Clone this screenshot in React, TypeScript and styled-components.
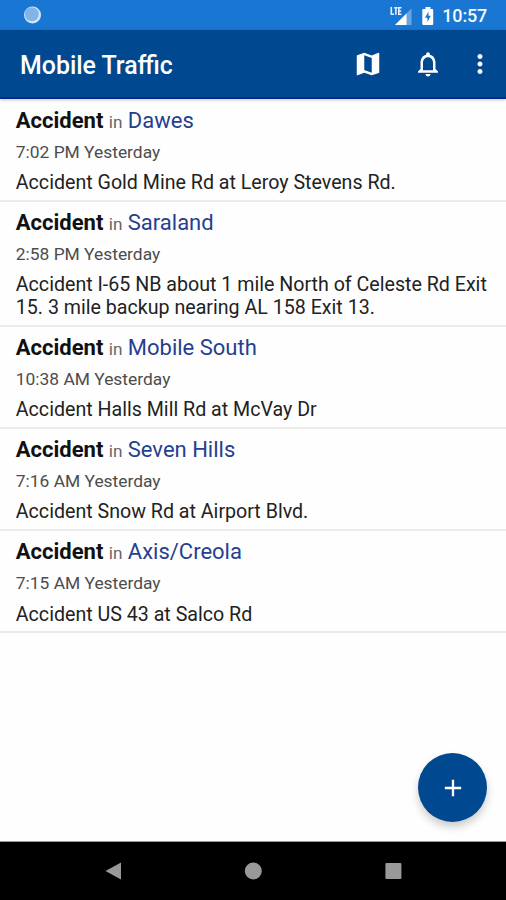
import React from 'react';
import styled, { createGlobalStyle } from 'styled-components';
import { MdNotificationsNone, MdMoreVert, MdAdd } from 'react-icons/md';

const GlobalStyle = createGlobalStyle`
  * { box-sizing: border-box; }
  body { margin: 0; background: #fff; font-family: Roboto, "Liberation Sans", sans-serif; }
`;

const Screen = styled.div`
  position: relative;
  display: flex;
  flex-direction: column;
  width: 506px;
  height: 900px;
  background: #fefefe;
  overflow: hidden;
`;

const StatusBar = styled.div`
  display: flex;
  align-items: center;
  flex: none;
  height: 30px;
  padding: 1px 19px 0 23px;
  background: #1976d2;
  color: #f4f8fd;
`;

const StatusIcons = styled.div`
  display: flex;
  align-items: center;
  margin-left: auto;
`;

const Clock = styled.span`
  margin-left: 6px;
  font-size: 18px;
  line-height: 28px;
  font-weight: 500;
  letter-spacing: -0.2px;
`;

const AppBar = styled.header`
  display: flex;
  align-items: center;
  flex: none;
  height: 69px;
  padding: 1px 11px 0 20px;
  background: #004990;
  border-bottom: 2px solid #04298a;
  box-shadow: 0 1px 3px rgba(0, 0, 0, 0.22);
  color: #fff;
  z-index: 1;
`;

const Title = styled.h1`
  flex: 1;
  margin: 0;
  padding-top: 3px;
  font-size: 24.9px;
  line-height: 32px;
  font-weight: 500;
`;

const IconButton = styled.button<{ $gap?: number }>`
  display: flex;
  padding: 0;
  margin: 0 0 0 ${({ $gap = 0 }) => $gap}px;
  border: 0;
  background: none;
  color: inherit;
`;

const List = styled.main`
  flex: 1;
  padding-top: 0.5px;
`;

const Item = styled.article`
  padding: 7.3px 16px 4.8px 15.8px;
  border-bottom: 2px solid #ebebeb;
`;

const Heading = styled.h2`
  margin: 0;
  font-size: 22px;
  line-height: 28px;
  font-weight: 700;
  color: #111;
`;

const In = styled.span`
  margin-right: 1px;
  font-size: 17.2px;
  line-height: 1;
  font-weight: 400;
  color: #666;
`;

const Place = styled.span`
  font-weight: 400;
  color: #26408f;
`;

const Time = styled.div`
  margin-top: 6px;
  font-size: 17.4px;
  line-height: 22px;
  color: #4c4c4c;
`;

const Description = styled.div`
  margin-top: 9.3px;
  font-size: 19.64px;
  line-height: 22.8px;
  color: #222;
`;

const Fab = styled.button`
  position: absolute;
  right: 19px;
  top: 753px;
  display: flex;
  align-items: center;
  justify-content: center;
  width: 69px;
  height: 69px;
  padding: 0;
  border: 0;
  border-radius: 50%;
  background: #004990;
  color: #fff;
  box-shadow: 0 5px 8px rgba(0, 0, 0, 0.2);
`;

const NavBar = styled.nav`
  display: flex;
  justify-content: center;
  align-items: center;
  gap: 114px;
  flex: none;
  height: 59px;
  padding-bottom: 1px;
  background: #000;
  border-top: 1px solid #999;
`;

const incidents = [
  { place: 'Dawes', time: '7:02 PM Yesterday', text: ['Accident Gold Mine Rd at Leroy Stevens Rd.'] },
  { place: 'Saraland', time: '2:58 PM Yesterday', text: ['Accident I-65 NB about 1 mile North of Celeste Rd Exit', '15. 3 mile backup nearing AL 158 Exit 13.'] },
  { place: 'Mobile South', time: '10:38 AM Yesterday', text: ['Accident Halls Mill Rd at McVay Dr'] },
  { place: 'Seven Hills', time: '7:16 AM Yesterday', text: ['Accident Snow Rd at Airport Blvd.'] },
  { place: 'Axis/Creola', time: '7:15 AM Yesterday', text: ['Accident US 43 at Salco Rd'] },
];

export default function App() {
  return (
    <>
      <GlobalStyle />
      <Screen>
        <StatusBar>
          <svg width="20" height="20" viewBox="0 0 20 20">
            <circle cx="9.5" cy="9" r="8.5" fill="#d3e9fb" />
            <circle cx="8.8" cy="8.3" r="7" fill="#82b4e7" />
          </svg>
          <StatusIcons>
            <svg width="23" height="20" viewBox="0 0 23 20">
              <path d="M22.5 2.5V19H6z" fill="#69a5e0" />
              <path d="M17.500 7.500V19H6z" fill="#fff" />
              <path d="M2.300 1v7.300H5M5.200 1.800h3.400M6.900 1.800v7M12.500 1.800H9.800v6.500h2.700M9.800 5h2.400" fill="none" stroke="#e4f0fc" strokeWidth="1.600" />
            </svg>
            <svg width="24" height="20" viewBox="0 0 24 20">
              <path d="M13.500 1h5v2h1.700q1 0 1 1v14q0 1-1 1H11.300q-1 0-1-1V4q0-1 1-1h2.200z" fill="#fff" />
              <path d="M16.500 5.500l-3.500 6.200h2.400V16l3.400-6.200h-2.300z" fill="#1976d2" />
            </svg>
            <Clock>10:57</Clock>
          </StatusIcons>
        </StatusBar>
        <AppBar>
          <Title>Mobile Traffic</Title>
          <IconButton aria-label="Map">
            <svg width="30" height="30" viewBox="0 0 24 24" fill="currentColor">
              <path d="M20.500 3l-.16.030L15 5.100 9 3 3.360 4.900c-.210.070-.36.250-.36.480V20.500c0 .280.220.5.5.5l.16-.030L9 18.900l6 2.100 5.640-1.900c.210-.070.36-.250.36-.480V3.500c0-.280-.220-.5-.5-.5zM15 19l-6-2.110V5l6 2.110V19z" />
            </svg>
          </IconButton>
          <IconButton aria-label="Notifications" $gap={30}><MdNotificationsNone size={30} /></IconButton>
          <IconButton aria-label="More" $gap={22}><MdMoreVert size={30} /></IconButton>
        </AppBar>
        <List>
          {incidents.map((item) => (
            <Item key={item.place}>
              <Heading>
                Accident <In>in </In><Place>{item.place}</Place>
              </Heading>
              <Time>{item.time}</Time>
              <Description>
                {item.text.map((line) => <div key={line}>{line}</div>)}
              </Description>
            </Item>
          ))}
        </List>
        <Fab aria-label="Add"><MdAdd size={28} /></Fab>
        <NavBar>
          <svg width="26" height="26" viewBox="0 0 26 26"><path d="M5.500 13L21 4.500V21.500z" fill="#999" /></svg>
          <svg width="26" height="26" viewBox="0 0 26 26"><circle cx="13.300" cy="13" r="8.500" fill="#999" /></svg>
          <svg width="26" height="26" viewBox="0 0 26 26"><rect x="5.400" y="5" width="16" height="16" rx="1" fill="#999" /></svg>
        </NavBar>
      </Screen>
    </>
  );
}
